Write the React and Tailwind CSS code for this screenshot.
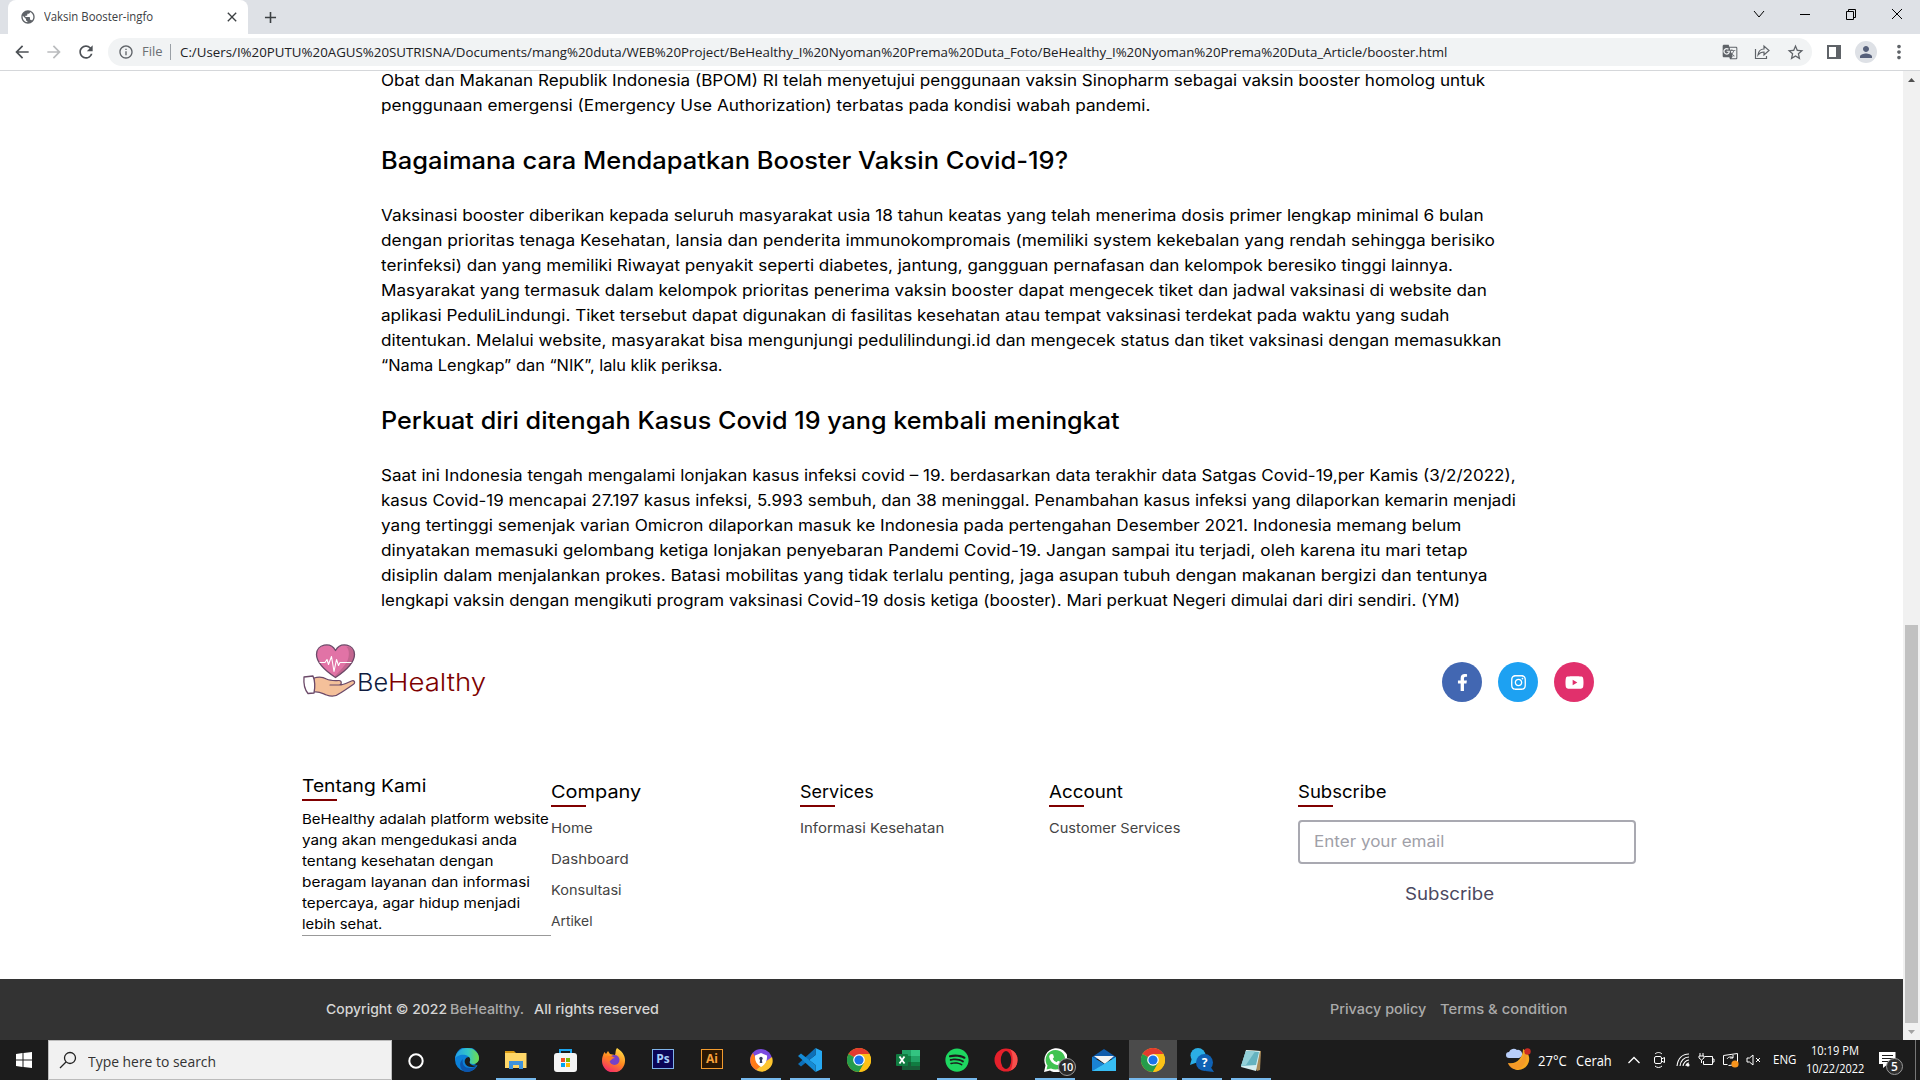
import React, { useLayoutEffect, useRef } from "react";
import { FaFacebookF, FaInstagram, FaYoutube, FaSpotify } from "react-icons/fa";
import { MdGTranslate, MdPerson, MdStarBorder, MdArrowBack, MdArrowForward, MdRefresh, MdInfoOutline, MdMoreVert, MdPublic, MdClose, MdAdd } from "react-icons/md";

// One line of text whose glyphs are stretched so that it spans `w` pixels.
function Fit({ w, className = "", children }) {
  const ref = useRef(null);
  useLayoutEffect(() => {
    const el = ref.current;
    el.style.transform = `scaleX(${w / el.offsetWidth})`;
  }, [w, children]);
  return (
    <span className={`block shrink-0 whitespace-pre ${className}`} style={{ width: w }}>
      <span ref={ref} className="inline-block origin-left">{children}</span>
    </span>
  );
}

const intro = [
  ["Obat dan Makanan Republik Indonesia (BPOM) RI telah menyetujui penggunaan vaksin Sinopharm sebagai vaksin booster homolog untuk", 1104],
  ["penggunaan emergensi (Emergency Use Authorization) terbatas pada kondisi wabah pandemi.", 769],
];
const how = [
  ["Vaksinasi booster diberikan kepada seluruh masyarakat usia 18 tahun keatas yang telah menerima dosis primer lengkap minimal 6 bulan", 1103],
  ["dengan prioritas tenaga Kesehatan, lansia dan penderita immunokompromais (memiliki system kekebalan yang rendah sehingga berisiko", 1114],
  ["terinfeksi) dan yang memiliki Riwayat penyakit seperti diabetes, jantung, gangguan pernafasan dan kelompok beresiko tinggi lainnya.", 1072],
  ["Masyarakat yang termasuk dalam kelompok prioritas penerima vaksin booster dapat mengecek tiket dan jadwal vaksinasi di website dan", 1106],
  ["aplikasi PeduliLindungi. Tiket tersebut dapat digunakan di fasilitas kesehatan atau tempat vaksinasi terdekat pada waktu yang sudah", 1069],
  ["ditentukan. Melalui website, masyarakat bisa mengunjungi pedulilindungi.id dan mengecek status dan tiket vaksinasi dengan memasukkan", 1120],
  ["“Nama Lengkap” dan “NIK”, lalu klik periksa.", 342],
];
const strengthen = [
  ["Saat ini Indonesia tengah mengalami lonjakan kasus infeksi covid – 19. berdasarkan data terakhir data Satgas Covid-19,per Kamis (3/2/2022),", 1135],
  ["kasus Covid-19 mencapai 27.197 kasus infeksi, 5.993 sembuh, dan 38 meninggal. Penambahan kasus infeksi yang dilaporkan kemarin menjadi", 1135],
  ["yang tertinggi semenjak varian Omicron dilaporkan masuk ke Indonesia pada pertengahan Desember 2021. Indonesia memang belum", 1080],
  ["dinyatakan memasuki gelombang ketiga lonjakan penyebaran Pandemi Covid-19. Jangan sampai itu terjadi, oleh karena itu mari tetap", 1087],
  ["disiplin dalam menjalankan prokes. Batasi mobilitas yang tidak terlalu penting, jaga asupan tubuh dengan makanan bergizi dan tentunya", 1106],
  ["lengkapi vaksin dengan mengikuti program vaksinasi Covid-19 dosis ketiga (booster). Mari perkuat Negeri dimulai dari diri sendiri. (YM)", 1079],
];
const about = [
  ["BeHealthy adalah platform website", 247],
  ["yang akan mengedukasi anda", 215],
  ["tentang kesehatan dengan", 192],
  ["beragam layanan dan informasi", 228],
  ["tepercaya, agar hidup menjadi", 218],
  ["lebih sehat.", 80],
];

function Paragraph({ lines }) {
  return (
    <p className="text-[15.5px] leading-[25px]">
      {lines.map(([t, w]) => <Fit key={t} w={w}>{t}</Fit>)}
    </p>
  );
}

function Browser() {
  return (
    <header className="shrink-0 font-['Open_Sans',sans-serif] text-[#3c4043]">
      <div className="flex h-[34px] bg-[#dee1e6] pl-2">
        <div className="flex h-full w-60 items-center rounded-t-lg bg-white pl-3">
          <MdPublic className="size-4 text-[#5f6368]" />
          <Fit w={109} className="ml-2 text-[12px]">Vaksin Booster-ingfo</Fit>
          <MdClose className="ml-auto mr-2 size-4" />
        </div>
        <MdAdd className="ml-[13px] mt-2 size-[19px]" />
        <div className="ml-auto flex h-7 items-center text-black">
          <svg className="w-[46px]" height="12" viewBox="0 0 46 12" fill="none" stroke="currentColor"><path d="M18 3l5 6 5-6" /></svg>
          <svg className="w-[46px]" height="12" viewBox="0 0 46 12" fill="none" stroke="currentColor"><path d="M18 6.500h10" /></svg>
          <svg className="w-[46px]" height="12" viewBox="0 0 46 12" fill="none" stroke="currentColor"><path d="M18.500 3.500h7v8h-7zM20.500 3.500v-2h7v8h-2" /></svg>
          <svg className="w-[46px]" height="12" viewBox="0 0 46 12" fill="none" stroke="currentColor"><path d="M18 1l10 10M28 1L18 11" /></svg>
        </div>
      </div>
      <div className="flex h-[37px] items-center border-b border-[#d5d7da] bg-white pl-3 pr-[10px]">
        <MdArrowBack className="size-5 text-[#4d5156]" />
        <MdArrowForward className="ml-3 size-5 text-[#babcbe]" />
        <MdRefresh className="ml-3 size-5 text-[#4d5156]" />
        <div className="ml-3 flex h-7 w-[1704px] items-center rounded-full bg-[#f1f3f4] pl-[10px] pr-[7px]">
          <MdInfoOutline className="size-4 text-[#5f6368]" />
          <Fit w={21} className="ml-2 mr-[7px] text-[13px] text-[#6b6f73]">File</Fit>
          <span className="h-4 w-px bg-[#9aa0a6]" />
          <Fit w={1267} className="ml-[9px] text-[13.5px] text-[#202124]">C:/Users/I%20PUTU%20AGUS%20SUTRISNA/Documents/mang%20duta/WEB%20Project/BeHealthy_I%20Nyoman%20Prema%20Duta_Foto/BeHealthy_I%20Nyoman%20Prema%20Duta_Article/booster.html</Fit>
          <div className="ml-auto flex items-center gap-4 text-[#5f6368]">
            <MdGTranslate className="size-4" />
            <svg className="size-4" viewBox="0 0 16 16" fill="none" stroke="currentColor" strokeWidth="1.200"><path d="M1.500 5v9.500h11V12M4 11c.5-4 3-6 6-6V2l5 4.500L10 11V8C7.500 8 5.500 9 4 11z" /></svg>
            <MdStarBorder className="size-[19px]" />
          </div>
        </div>
        <span className="ml-[15px] h-[14px] w-[14px] border-2 border-r-[5px] border-[#5f6368]" />
        <span className="ml-[14px] flex size-[22px] items-center justify-center rounded-full bg-[#dee1e6]"><MdPerson className="size-[18px] text-[#56607a]" /></span>
        <MdMoreVert className="ml-auto size-[22px] shrink-0 text-[#5f6368]" />
      </div>
    </header>
  );
}

function HeartLogo() {
  return (
    <svg width="55" height="54" viewBox="0 0 55 54" className="mt-px shrink-0" strokeLinejoin="round" strokeLinecap="round">
      <path d="M33.500 33.500C26 28.500 14.500 20 14.500 10.500c0-10.500 14-13 19-4 5-9 19-6.500 19 4 0 9.500-11.500 18-19 23z" fill="#e173a6" />
      <path d="M44 2.800c4 2 4 12-1 18-3 4-6 7-10 11l.5 1.700c7.500-5 19-13.500 19-23 0-5-4-8-8.500-7.700z" fill="#c2658f" />
      <path d="M33.500 33.500C26 28.500 14.500 20 14.500 10.500c0-10.500 14-13 19-4 5-9 19-6.500 19 4 0 9.500-11.500 18-19 23z" fill="none" stroke="#6b4968" strokeWidth="1.300" />
      <path d="M18 18.500h5l2-3 1.500 5 3-8 2.500 15 2.500-12 2 6 1.500-3H49" fill="none" stroke="#fff" strokeWidth="1.100" />
      <path d="M12 34c5-1.500 9-1 12.500 1 4 2 8 1.500 12.500 1.500 3 0 3 4.500 0 4.500h-9 11c4-1 7.500-2.500 10.500-4 3-1.200 4 1.800 2 3.200-5 3.500-10 7-14 9.300-3 2.500-8 3.500-13 1.500-5-2-8-4-12.500-3z" fill="#f4c09a" stroke="#6b4968" strokeWidth="1.200" />
      <path d="M2 33l9-1c2 5 2 12 1 17l-6 .5C3 46 1.500 39 2 33z" fill="#fff" stroke="#6b4968" strokeWidth="1.300" />
    </svg>
  );
}

function ColumnTitle({ w, children }) {
  return (
    <div>
      <Fit w={w} className="text-[17.5px] leading-[26px]">{children}</Fit>
      <div className="h-[2px] w-[35px] bg-[#800000]" />
    </div>
  );
}

function LinkColumn({ title, w, links }) {
  return (
    <div className="mt-[6px]">
      <ColumnTitle w={w}>{title}</ColumnTitle>
      <ul className="mt-[6px] text-[13.5px] leading-[31px] text-[#444]">
        {links.map(([t, lw]) => <li key={t}><Fit w={lw}>{t}</Fit></li>)}
      </ul>
    </div>
  );
}

function Page() {
  return (
    <div className="flex min-h-0 flex-1 bg-white">
      <main className="flex min-w-0 flex-1 flex-col overflow-hidden font-[Inter,sans-serif] text-black">
        <article className="-mt-[3px] pl-[380.500px]">
          <Paragraph lines={intro} />
          <h2 className="mb-6 mt-[25px] text-[24px] font-medium leading-9"><Fit w={687}>Bagaimana cara Mendapatkan Booster Vaksin Covid-19?</Fit></h2>
          <Paragraph lines={how} />
          <h2 className="mb-6 mt-[25px] text-[24px] font-medium leading-9"><Fit w={739}>Perkuat diri ditengah Kasus Covid 19 yang kembali meningkat</Fit></h2>
          <Paragraph lines={strengthen} />
        </article>
        <section className="flex flex-1 flex-col pl-[301.600px] pt-[30px]">
          <div className="flex h-[59px] items-start">
            <HeartLogo />
            <div className="mt-[21px] flex text-[24.5px] font-light leading-9">
              <Fit w={31} className="text-[#0f1c3f]">Be</Fit>
              <Fit w={98} className="text-[#7d0000]">Healthy</Fit>
            </div>
            <div className="ml-auto mr-[309px] mt-[19px] flex gap-4 text-white">
              <span className="flex size-10 items-center justify-center rounded-full bg-[#4267b2]"><FaFacebookF className="size-[17px]" /></span>
              <span className="flex size-10 items-center justify-center rounded-full bg-[#1da1f2]"><FaInstagram className="size-[17px]" /></span>
              <span className="flex size-10 items-center justify-center rounded-full bg-[#e1306c]"><FaYoutube className="size-[19px]" /></span>
            </div>
          </div>
          <div className="mt-[71px] grid grid-cols-[249px_249px_249px_249px_338px]">
            <div>
              <ColumnTitle w={124}>Tentang Kami</ColumnTitle>
              <p className="mt-2 border-b border-[#999] text-[13.500px] leading-[21px]">
                {about.map(([t, w]) => <Fit key={t} w={w}>{t}</Fit>)}
              </p>
            </div>
            <LinkColumn title="Company" w={90} links={[["Home", 42], ["Dashboard", 78], ["Konsultasi", 71], ["Artikel", 42]]} />
            <LinkColumn title="Services" w={74} links={[["Informasi Kesehatan", 144]]} />
            <LinkColumn title="Account" w={74} links={[["Customer Services", 131]]} />
            <div className="mt-[6px]">
              <ColumnTitle w={89}>Subscribe</ColumnTitle>
              <div className="mt-[13px] flex h-11 items-center rounded border-2 border-[#a9a9b1] pb-[2px] pl-[14px] text-[16px] text-[#a0a0a8]"><Fit w={130}>Enter your email</Fit></div>
              <div className="mt-[17px] pl-[107px] text-[17px] leading-[26px] text-[#4b4860]"><Fit w={89}>Subscribe</Fit></div>
            </div>
          </div>
        </section>
        <footer className="flex h-[61px] shrink-0 items-center bg-[#333] text-[13.500px] font-medium text-[#aaa]">
          <Fit w={121} className="ml-[326px] text-[#d5d5d5]">Copyright © 2022</Fit>
          <Fit w={74} className="ml-[3px]">BeHealthy.</Fit>
          <Fit w={125} className="ml-[10px] text-[#d5d5d5]">All rights reserved</Fit>
          <Fit w={96} className="ml-auto">Privacy policy</Fit>
          <Fit w={127} className="ml-[14px] mr-[336px]">Terms &amp; condition</Fit>
        </footer>
      </main>
      <aside className="flex w-[17px] flex-col items-center bg-[#f1f1f1]">
        <svg width="17" height="17" viewBox="0 0 17 17" className="shrink-0"><path d="M5 11l3.500-4L12 11z" fill="#505050" /></svg>
        <span className="mt-[537px] w-[13px] flex-1 bg-[#c1c1c1]" />
        <svg width="17" height="17" viewBox="0 0 17 17" className="shrink-0"><path d="M5 7l3.500 4L12 7z" fill="#a3a3a3" /></svg>
      </aside>
    </div>
  );
}

const Svg = ({ children }) => <svg width="24" height="24" viewBox="0 0 24 24">{children}</svg>;

const Cortana = () => <Svg><circle cx="12" cy="12" r="6.700" fill="none" stroke="#fff" strokeWidth="2" /></Svg>;
const Edge = () => (
  <Svg>
    <defs>
      <linearGradient id="edgeTop" x1="0" x2="1"><stop offset="0" stopColor="#239ee8" /><stop offset=".55" stopColor="#34c7c7" /><stop offset="1" stopColor="#72dc45" /></linearGradient>
    </defs>
    <path d="M0 12a12 12 0 0 1 24-2c0 3-2 5-5 6l3.500 1.500A12 12 0 0 1 0 12z" fill="#0b80d8" />
    <path d="M0 11C1 4 6 0 12 0c7 0 12 5 12 10 0 4-3 6-6 6-2 0-4-.8-3.500-2 1.500-2 .5-6-4-7C6 6 1 8 0 11z" fill="url(#edgeTop)" />
    <path d="M8 11c-2 7 4 12 14 7A12 12 0 0 1 9 23.600C4 20 4 14 8 11z" fill="#0c55ad" />
    <path d="M14.500 14c1-1.500 1-3.500-.5-5-3 0-5 3-4 6 1 4 7 5.500 12 2.500-3 .5-7-.5-7.500-3.500z" fill="#1c1c1c" />
  </Svg>
);
const Explorer = () => <Svg><path d="M1 3h9l2 2H1z" fill="#d99a13" /><path d="M1 5h21.500v15H1z" fill="#ffd768" /><path d="M5 13h14v8h-4v-4H9v4H5z" fill="#3f93dc" /></Svg>;
const Store = () => <Svg><path d="M7 6V2h11v4" fill="none" stroke="#1ca5ee" strokeWidth="2" /><rect x="1" y="5" width="23" height="19" rx="3" fill="#f5f5f5" /><path d="M8 10h4v4H8z" fill="#f25022" /><path d="M13 10h4v4h-4z" fill="#7fba00" /><path d="M8 15h4v4H8z" fill="#00a4ef" /><path d="M13 15h4v4h-4z" fill="#ffb900" /></Svg>;
const Firefox = () => (
  <Svg>
    <defs><linearGradient id="fox" x1=".8" y1="0" x2=".3" y2="1"><stop offset="0" stopColor="#ffe14a" /><stop offset=".5" stopColor="#ff8a1f" /><stop offset="1" stopColor="#f5286b" /></linearGradient></defs>
    <path d="M15 0c5 3 8.500 8 8 13a11.500 11.500 0 0 1-23 0c0-4 1-6 2.500-9L4 6l2-3 2 3 5 1c1-2 0-4 2-7z" fill="url(#fox)" />
    <circle cx="12.500" cy="12" r="5" fill="#7542c9" /><path d="M4 9c4-2 6-1 9 1-4 0-3 3-6 3z" fill="#ff7b24" />
  </Svg>
);
const Adobe = ({ ai }) => (
  <span className={`mb-[3px] flex h-5 w-[22px] items-center justify-center border-[1.500px] font-['Open_Sans',sans-serif] text-[12px] font-bold leading-none ${ai ? "border-[#f29b2e] bg-[#2b1703] text-[#f7a13b]" : "border-[#7fb3ea] bg-[#0b0657] text-[#a9cffa]"}`}>{ai ? "Ai" : "Ps"}</span>
);
const SecureBrowser = () => (
  <Svg>
    <circle cx="12" cy="12" r="11" fill="#7a4be0" /><path d="M4 5a11 11 0 0 0 3 17l6-5L6 9z" fill="#ff7a17" /><path d="M7 22a11 11 0 0 0 16-13l-7 5z" fill="#fec52e" />
    <path d="M12 5l6 2.500c.5 5-1.500 9-6 11.500-4.500-2.500-6.500-6.500-6-11.500z" fill="#fff" /><circle cx="12" cy="10.500" r="1.700" fill="#333d60" /><path d="M11.200 11h1.600l.5 4h-2.600z" fill="#333d60" />
  </Svg>
);
const Code = () => <Svg><path d="M17.500 7L11 12l6.500 5v7l6.500-3V3l-6.500-3z" fill="#27a9f2" /><path d="M17.500 0v7L3 18.500 0 16z" fill="#0d70b8" /><path d="M3 5.500L17.500 17v7L0 8z" fill="#158bd5" /></Svg>;
const Chrome = () => (
  <Svg>
    <circle cx="12" cy="12" r="12" fill="#fbc116" />
    <path d="M12 12L1.600 6a12 12 0 0 1 20.800 0z" fill="#e33b2e" />
    <path d="M1.600 6A12 12 0 0 0 12 24l5.200-9L12 12z" fill="#259c4b" />
    <path d="M12 6h10.400A12 12 0 0 1 12 24l5.200-9z" fill="#fbc116" />
    <circle cx="12" cy="12" r="5.800" fill="#fff" /><circle cx="12" cy="12" r="4.600" fill="#1a73e8" />
  </Svg>
);
const Excel = () => <Svg><path d="M6 2h9v20H6z" fill="#21a366" /><path d="M15 2h9v6h-9z" fill="#33c481" /><path d="M6 8h9v6H6z" fill="#107c41" /><path d="M15 8h9v6h-9z" fill="#21a366" /><path d="M6 14h18v8H6z" fill="#185c37" /><path d="M15 14h9v4h-9z" fill="#107c41" /><rect y="6" width="12" height="12" rx="1" fill="#107c41" /><path d="M3.500 8.500l5 7M8.500 8.500l-5 7" stroke="#fff" strokeWidth="1.800" /></Svg>;
const Opera = () => <Svg><ellipse cx="12" cy="12" rx="11.500" ry="11.500" fill="#e5202b" /><path d="M16 1.200a11.500 11.500 0 0 1 0 21.600c3-2 4-17 0-21.600z" fill="#f8514d" /><ellipse cx="12" cy="12" rx="5.200" ry="9" fill="#1c1c1c" /></Svg>;
const Mail = () => <Svg><path d="M0 9l12-8 12 8v2H0z" fill="#0f5bab" /><path d="M2 8h20l-9 8z" fill="#f3f3f3" /><path d="M0 9l24 14H0z" fill="#1c91df" /><path d="M24 9L0 23h24z" fill="#37bdf3" /><path d="M0 9l12 7L0 23z" fill="#1a82d2" /></Svg>;
const Help = () => <Svg><circle cx="8" cy="7.500" r="7.500" fill="#2baee5" /><path d="M2 10l-2 7 8-3z" fill="#2baee5" /><circle cx="14.500" cy="14.500" r="8.500" fill="#0f62b5" /><path d="M20 18l4 6-9-1z" fill="#0f62b5" /><text x="14.500" y="19" fill="#fff" fontSize="12" fontWeight="700" textAnchor="middle" fontFamily="Open Sans">?</text></Svg>;
const Notepad = () => <Svg><path d="M7 2l15 1-1 19-3 1z" fill="#a98a58" /><path d="M7 2l14 1-4 20-15-4z" fill="#d5eef1" /><path d="M7 3l13 1-3 13-15 1z" fill="#65b3c0" /><path d="M7 3l9 .500L7 17l-5 1z" fill="#93d0d8" /></Svg>;
const WhatsApp = () => (
  <span className="relative flex size-6 items-center justify-center">
    <svg width="24" height="24" viewBox="0 0 24 24"><path d="M1 24l1.500-6.500A12 12 0 1 1 7 22.500z" fill="#fff" /><path d="M3.500 21.500l1-4A9.800 9.800 0 1 1 8 20.500z" fill="#40c351" /><path d="M8 6l2 .3 1 3-1.200 1.500c1 1.800 2 2.700 3.800 3.500l1.400-1.500 3 1.400c0 2.500-2 3.300-4 2.800-4-1-7-4-7.800-8C6 7.500 7 6.500 8 6z" fill="#fff" /></svg>
    <span className="absolute -bottom-[4px] left-[15px] flex size-[18px] items-center justify-center rounded-full border border-[#999] bg-[#2b2b2b] text-[11px] font-semibold tracking-tighter text-white">10</span>
  </span>
);

const apps = [
  [<Edge />, ""], [<Explorer />, "on"], [<Store />, ""], [<Firefox />, ""], [<Adobe />, ""], [<Adobe ai />, ""],
  [<SecureBrowser />, "on"], [<Code />, "on"], [<Chrome />, ""], [<Excel />, ""],
  [<span className="flex size-6 items-center justify-center"><FaSpotify className="size-6 text-[#1ed760]" /></span>, "on"],
  [<Opera />, ""], [<WhatsApp />, "on"], [<Mail />, ""], [<Chrome />, "active"], [<Help />, "on"], [<Notepad />, "on"],
];

function Tray() {
  return (
    <div className="ml-auto flex h-full items-center text-[13px] text-white">
      <svg width="25" height="24" viewBox="0 0 25 24">
        <path d="M17 1a11 11 0 1 1-15 14c8 2 15-5 15-14z" fill="#f7a821" /><path d="M2 15c8 3 16-3 17-11 4 7-1 15-7 17-5 1-9-2-10-6z" fill="#f2912d" opacity=".6" />
        <circle cx="21.500" cy="3.500" r="3.200" fill="#c92a22" /><path d="M3 10a3 3 0 0 1 0-6 5 5 0 0 1 8-2 4 4 0 0 1 2 8z" fill="#b9cffa" />
      </svg>
      <Fit w={29} className="ml-[7px] mt-[2px] text-[14px] leading-5">27°C</Fit>
      <Fit w={36} className="ml-[9px] mt-[2px] text-[14px] leading-5">Cerah</Fit>
      <svg className="ml-[15px]" width="14" height="10" viewBox="0 0 14 10" fill="none" stroke="#fff" strokeWidth="1.300"><path d="M1.500 8L7 2.500 12.500 8" /></svg>
      <svg className="ml-[11px]" width="14" height="18" viewBox="0 0 14 18" fill="none" stroke="#fff"><rect x="2.500" y="5.500" width="7" height="7" rx="1.500" /><path d="M9.500 8l3-1.500v5l-3-1.500M3 3c2-2 5-2 7 0M3 15c2 2 5 2 7 0" /></svg>
      <svg className="ml-[10px]" width="15" height="16" viewBox="0 0 15 16" fill="none" stroke="#fff" strokeWidth="1.100"><path d="M1 14C2 6 7 2 13 2M4 14c.5-5 4-9 9-9M7 14c.5-3 3-6 6-6M10 14c0-1 1-3 3-3" /><circle cx="12" cy="13" r="1" fill="#fff" /></svg>
      <svg className="ml-[7px]" width="17" height="16" viewBox="0 0 17 16" fill="none" stroke="#fff"><path d="M6.500 4.500h8v8h-9V9M14.500 7h1.500v3h-1.500M2 1v3M5 1v3M1 4h5v2L3.500 8 1 6zM3.500 8v3" /></svg>
      <svg className="ml-[7px]" width="18" height="18" viewBox="0 0 18 18" fill="none" stroke="#fff"><path d="M1.500 4.500l14-2v11l-9 1M1.500 4.500v9h4M5 8c1-2 4-3 6-1M11 4v3H8" /><circle cx="13" cy="13" r="3.600" fill="#f7941d" stroke="none" /></svg>
      <svg className="ml-[6px]" width="16" height="14" viewBox="0 0 16 14" fill="none" stroke="#fff"><path d="M1 5h2.500L7 2v10L3.500 9H1zM10 5l4 4M14 5l-4 4" /></svg>
      <Fit w={23} className="ml-[11px] text-[13px]">ENG</Fit>
      <div className="ml-[10px] flex w-[58px] flex-col items-center text-[12.500px] leading-[18px]">
        <Fit w={48}>10:19 PM</Fit>
        <Fit w={58}>10/22/2022</Fit>
      </div>
      <span className="relative ml-[15px] mr-[19px]">
        <svg width="17" height="18" viewBox="0 0 17 18"><path d="M0 1h16.500v12H9l-5 4v-4H0z" fill="#fff" /><path d="M3 4.500h11M3 7.500h11M3 10.500h7" stroke="#1c1c1c" /></svg>
        <span className="absolute -bottom-[6px] left-[7px] flex size-[17px] items-center justify-center rounded-full border border-[#999] bg-[#2e2e2e] text-[12px] font-semibold leading-none">5</span>
      </span>
      <span className="mr-1 h-full w-px bg-[#777]" />
    </div>
  );
}

function Taskbar() {
  return (
    <nav className="flex h-10 shrink-0 items-center bg-[#1c1c1c] font-['Open_Sans',sans-serif]">
      <span className="flex w-12 justify-center">
        <svg width="16" height="16" viewBox="0 0 16 16" fill="#fff"><path d="M0 2l6.500-1v6.500H0zM7.500 1L16 0v7.500H7.500zM0 8.500h6.500V15L0 14zM7.500 8.500H16V16l-8.500-1z" /></svg>
      </span>
      <div className="flex h-10 w-[344px] items-center border border-[#bbb] bg-[#f1f1f1] pl-[10px]">
        <svg width="18" height="18" viewBox="0 0 18 18" fill="none" stroke="#222" strokeWidth="1.300"><circle cx="11" cy="7" r="5.500" /><path d="M7 11l-6 6" /></svg>
        <Fit w={128} className="ml-[11px] mt-[2px] text-[15px] text-[#333]">Type here to search</Fit>
      </div>
      <span className="mr-[3px] mt-[2px] flex w-12 justify-center"><Cortana /></span>
      <div className="flex gap-px">
        {apps.map(([icon, state], i) => (
          <span key={i} className={`flex h-10 w-12 flex-col items-center ${state === "active" ? "bg-[#4b4b4b]" : ""}`}>
            <span className="flex h-[38px] items-center pt-[2px]">{icon}</span>
            {state === "on" && <span className="h-[2px] w-10 bg-[#76b9ed]" />}
            {state === "active" && <span className="h-[2px] w-12 bg-[#76b9ed]" />}
          </span>
        ))}
      </div>
      <Tray />
    </nav>
  );
}

export default function App() {
  return (
    <div className="flex h-[1080px] w-[1920px] flex-col overflow-hidden bg-white">
      <Browser />
      <Page />
      <Taskbar />
    </div>
  );
}
